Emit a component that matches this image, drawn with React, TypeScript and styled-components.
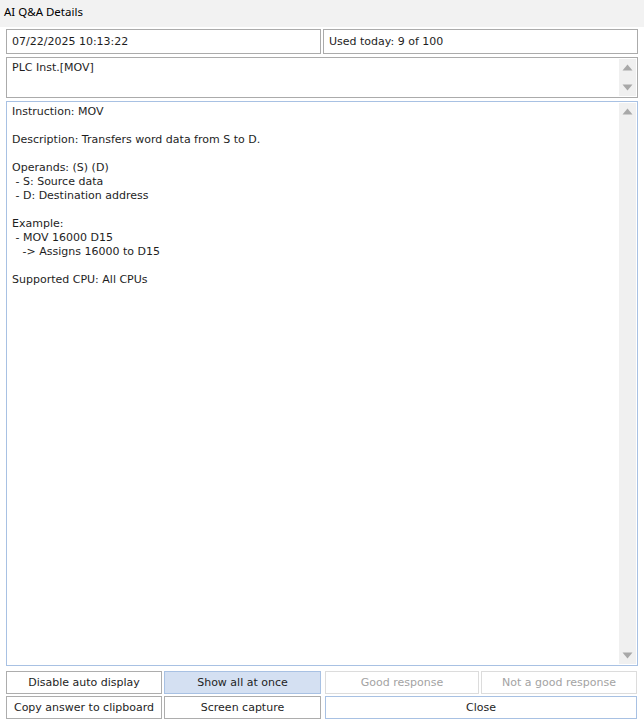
import React from "react";
import styled, { createGlobalStyle } from "styled-components";

const Global = createGlobalStyle`
  html, body { margin: 0; padding: 0; background: #ffffff; }
  body { font-family: "DejaVu Sans", sans-serif; }
`;

const Window = styled.div`
  width: 644px;
  height: 727px;
  display: flex;
  flex-direction: column;
  background: #ffffff;
  box-sizing: border-box;
`;

const TitleBar = styled.div`
  height: 27px;
  flex: none;
  box-sizing: border-box;
  background: #f2f2f2;
  display: flex;
  align-items: center;
  padding: 0 0 4px 4px;
  font-family: "Noto Sans", "Open Sans", sans-serif;
  font-size: 11.5px;
  color: #000;
`;

const Body = styled.div`
  flex: 1;
  display: flex;
  flex-direction: column;
  padding: 2px 6px 0 6px;
  gap: 3px;
`;

const TopRow = styled.div`
  display: grid;
  grid-template-columns: 315px 315px;
  column-gap: 2px;
`;

const Field = styled.div`
  height: 25px;
  border: 1px solid #ababab;
  box-sizing: border-box;
  display: flex;
  align-items: center;
  padding: 0 0 1px 5px;
  font-size: 11px;
  color: #1e1e1e;
`;

const Memo = styled.div<{ $h: number; $focus?: boolean }>`
  position: relative;
  height: ${(p) => p.$h}px;
  border: 1px solid ${(p) => (p.$focus ? "#a8c1e3" : "#ababab")};
  box-sizing: border-box;
  display: flex;
`;

const MemoText = styled.div`
  flex: 1;
  padding: 3px 5px;
  font-size: 11px;
  line-height: 14px;
  color: #1e1e1e;
  white-space: pre;
`;

const ScrollBar = styled.div`
  width: 17px;
  margin: 1px 1px 1px 0;
  background: #f0f0f0;
  display: flex;
  flex-direction: column;
  justify-content: space-between;
  align-items: center;
`;

const Arrow = styled.div`
  height: 17px;
  display: flex;
  align-items: center;
  justify-content: center;
`;

const ButtonGrid = styled.div`
  margin-top: 2px;
  display: grid;
  grid-template-columns: 156px 157px 156px 156px;
  grid-auto-rows: 23px;
  row-gap: 2px;
  column-gap: 2px;
`;

const Btn = styled.div<{ $kind?: "normal" | "active" | "disabled" | "default"; $span?: number; $gapLeft?: boolean }>`
  box-sizing: border-box;
  grid-column: span ${(p) => p.$span ?? 1};
  margin-left: ${(p) => (p.$gapLeft ? "2px" : "0")};
  display: flex;
  align-items: center;
  justify-content: center;
  font-size: 11px;
  border: 1px solid
    ${(p) =>
      p.$kind === "active" || p.$kind === "default"
        ? "#a8c1e3"
        : p.$kind === "disabled"
        ? "#dcdcdc"
        : "#adadad"};
  background: ${(p) => (p.$kind === "active" ? "#d4e0f2" : "#ffffff")};
  color: ${(p) => (p.$kind === "disabled" ? "#a3a3a3" : "#1e1e1e")};
`;

const Up = () => (
  <svg width="11" height="7" viewBox="0 0 11 7">
    <path d="M5.5 0.5 L10.5 6.5 L0.5 6.5 Z" fill="#a8a8a8" />
  </svg>
);
const Down = () => (
  <svg width="11" height="7" viewBox="0 0 11 7">
    <path d="M0.5 0.5 L10.5 0.5 L5.5 6.5 Z" fill="#a8a8a8" />
  </svg>
);

const answer = `Instruction: MOV

Description: Transfers word data from S to D.

Operands: (S) (D)
 - S: Source data
 - D: Destination address

Example:
 - MOV 16000 D15
   -> Assigns 16000 to D15

Supported CPU: All CPUs`;

export default function App() {
  return (
    <>
      <Global />
      <Window>
        <TitleBar>AI Q&amp;A Details</TitleBar>
        <Body>
          <TopRow>
            <Field>07/22/2025 10:13:22</Field>
            <Field>Used today: 9 of 100</Field>
          </TopRow>
          <Memo $h={41}>
            <MemoText>PLC Inst.[MOV]</MemoText>
            <ScrollBar>
              <Arrow><Up /></Arrow>
              <Arrow><Down /></Arrow>
            </ScrollBar>
          </Memo>
          <Memo $h={565} $focus>
            <MemoText>{answer}</MemoText>
            <ScrollBar>
              <Arrow><Up /></Arrow>
              <Arrow><Down /></Arrow>
            </ScrollBar>
          </Memo>
          <ButtonGrid>
            <Btn>Disable auto display</Btn>
            <Btn $kind="active">Show all at once</Btn>
            <Btn $kind="disabled" $gapLeft>Good response</Btn>
            <Btn $kind="disabled">Not a good response</Btn>
            <Btn>Copy answer to clipboard</Btn>
            <Btn>Screen capture</Btn>
            <Btn $kind="default" $span={2} $gapLeft>Close</Btn>
          </ButtonGrid>
        </Body>
      </Window>
    </>
  );
}
